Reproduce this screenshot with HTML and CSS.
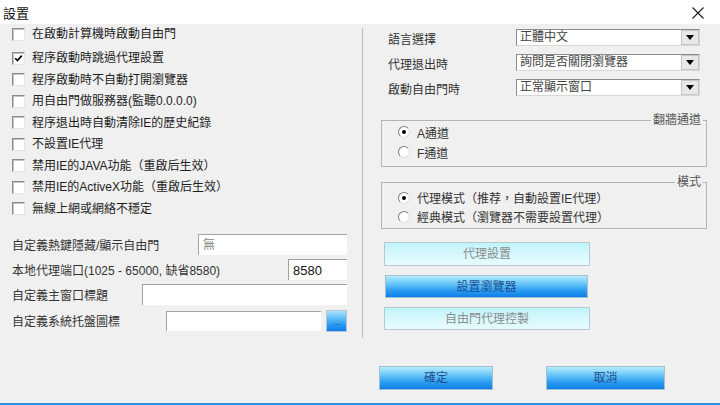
FILE: index.html
```html
<!DOCTYPE html>
<html lang="zh-Hant">
<head>
<meta charset="utf-8">
<title>設置</title>
<link rel="stylesheet" href="styles.css">
</head>
<body>
<div class="window">
  <header class="titlebar">
    <span class="title">設置</span>
    <span class="close"><svg width="12" height="12" viewBox="0 0 12 12"><path d="M0.5 0.5 L11.5 11.5 M11.5 0.5 L0.5 11.5" stroke="#1a1a1a" stroke-width="1.1" fill="none"/></svg></span>
  </header>
  <main class="content">
    <section class="left">
      <ul class="checks">
        <li class="check first"><span class="box"></span>在啟動計算機時啟動自由門</li>
        <li class="check"><span class="box"><svg width="9" height="9" viewBox="0 0 9 9"><path d="M1.2 4.2 L3.4 6.6 L7.8 1.6" stroke="#000" stroke-width="1.7" fill="none"/></svg></span>程序啟動時跳過代理設置</li>
        <li class="check"><span class="box"></span>程序啟動時不自動打開瀏覽器</li>
        <li class="check"><span class="box"></span>用自由門做服務器(監聽0.0.0.0)</li>
        <li class="check"><span class="box"></span>程序退出時自動清除IE的歷史紀錄</li>
        <li class="check"><span class="box"></span>不設置IE代理</li>
        <li class="check"><span class="box"></span>禁用IE的JAVA功能（重啟后生效）</li>
        <li class="check"><span class="box"></span>禁用IE的ActiveX功能（重啟后生效）</li>
        <li class="check"><span class="box"></span>無線上網或網絡不穩定</li>
      </ul>
      <div class="fields">
        <div class="field"><label>自定義熱鍵隱藏/顯示自由門</label><span class="input w-hotkey placeholder">無</span></div>
        <div class="field"><label>本地代理端口(1025 - 65000, 缺省8580)</label><span class="input w-port">8580</span></div>
        <div class="field"><label>自定義主窗口標題</label><span class="input w-title"></span></div>
        <div class="field last"><label>自定義系統托盤圖標</label><span class="input w-tray"></span><span class="browse">...</span></div>
      </div>
    </section>
    <section class="right">
      <div class="opts">
        <div class="opt"><label>語言選擇</label><span class="select"><span>正體中文</span><span class="arrow"><svg width="8" height="5" viewBox="0 0 8 5"><path d="M0 0 H8 L4 5 Z" fill="#000"/></svg></span></span></div>
        <div class="opt"><label>代理退出時</label><span class="select"><span>詢問是否關閉瀏覽器</span><span class="arrow"><svg width="8" height="5" viewBox="0 0 8 5"><path d="M0 0 H8 L4 5 Z" fill="#000"/></svg></span></span></div>
        <div class="opt"><label>啟動自由門時</label><span class="select"><span>正常顯示窗口</span><span class="arrow"><svg width="8" height="5" viewBox="0 0 8 5"><path d="M0 0 H8 L4 5 Z" fill="#000"/></svg></span></span></div>
      </div>
      <div class="group group-a">
        <span class="legend">翻牆通道</span>
        <div class="radio"><span class="dot on"></span>A通道</div>
        <div class="radio"><span class="dot"></span>F通道</div>
      </div>
      <div class="group group-b">
        <span class="legend">模式</span>
        <div class="radio"><span class="dot on"></span>代理模式（推荐，自動設置IE代理）</div>
        <div class="radio"><span class="dot"></span>經典模式（瀏覽器不需要設置代理）</div>
      </div>
      <div class="actions">
        <button class="btn light">代理設置</button>
        <button class="btn blue mid">設置瀏覽器</button>
        <button class="btn light short">自由門代理控製</button>
      </div>
    </section>
  </main>
  <footer class="footer">
    <button class="btn blue ok">確定</button>
    <button class="btn blue cancel">取消</button>
  </footer>
</div>
</body>
</html>
```

FILE: styles.css
```css
* { box-sizing: border-box; margin: 0; padding: 0; }
html, body { width: 720px; height: 405px; overflow: hidden; }
body {
  font-family: "Liberation Sans", "Noto Sans CJK TC", sans-serif;
  font-size: 12px;
  color: #222;
  background: #f0f0f0;
}
.window { width: 720px; height: 405px; display: flex; flex-direction: column; }

.titlebar {
  height: 24px;
  background: #fff;
  display: flex;
  align-items: center;
  justify-content: space-between;
  padding: 0 16px 0 3px;
}
.title { font-size: 13px; color: #111; }
.close { width: 12px; height: 12px; display: flex; margin-top: 1px; }

.content { height: 314px; display: flex; }

.left { width: 362px; padding: 0 15px 0 12px; display: flex; flex-direction: column; }
.checks { list-style: none; }
.check { height: 21.5px; display: flex; align-items: center; gap: 7px; color: #1e1e1e; line-height: 14px; }
.check.first { height: 20px; margin-bottom: 3.5px; }
.box {
  width: 13px; height: 13px;
  background: #fff;
  border: 1px solid;
  border-color: #8a8a8a #e4e4e4 #e4e4e4 #8a8a8a;
  box-shadow: inset 1px 1px 0 #c4c4c4;
  display: flex; align-items: center; justify-content: center;
  flex: none;
}

.fields { margin-top: 14.5px; display: flex; flex-direction: column; gap: 4px; }
.field { height: 21px; display: flex; align-items: center; color: #333; }
.field.last { margin-top: 1px; }
.input {
  margin-left: auto;
  height: 21px;
  background: #fff;
  border-top: 1px solid #a2a2a2;
  border-left: 1px solid #a2a2a2;
  padding: 2px 4px;
  line-height: 17px;
  color: #111;
  font-size: 13px;
}
.input.placeholder { color: #888; font-size: 12px; }
.w-hotkey { width: 149px; }
.w-port { width: 59px; }
.w-title { width: 205px; }
.w-tray { width: 155px; height: 20px; }
.browse {
  width: 21px; height: 22px;
  margin-left: 5px;
  border: 1px solid #b6c6d2;
  background: linear-gradient(#a9e3fb, #4fb5f3 45%, #1c90ee 80%, #0e80e6);
  color: #1d4f91;
  font-size: 9px;
  line-height: 9px;
  text-align: center;
  display: flex; align-items: flex-end; justify-content: center;
  padding-bottom: 4px;
}

.right {
  flex: 1;
  margin-top: 4px;
  border-left: 1px solid #bcbcbc;
  padding: 1px 13px 0 18px;
  display: flex; flex-direction: column;
}
.opts { display: flex; flex-direction: column; gap: 8px; }
.opt { height: 17px; display: flex; align-items: center; }
.opt label { width: 135px; padding: 4px 0 0 7px; line-height: 14px; color: #333; }
.select {
  width: 184px; height: 17px;
  background: #fff;
  border: 1px solid;
  border-color: #8c8c8c #d8d8d8 #d8d8d8 #8c8c8c;
  display: flex; align-items: center; justify-content: space-between;
  padding-left: 3px;
  color: #444;
  line-height: 15px;
}
.arrow {
  width: 18px; height: 15px;
  background: #e8e8e8;
  border: 1px solid #c6c6c6;
  display: flex; align-items: center; justify-content: center;
}

.group { position: relative; border: 1px solid #b4b4b4; }
.group-a { margin-top: 24px; padding: 1px 0 4px 16px; }
.group-b { margin-top: 15px; padding: 5px 0 2px 16px; }
.group-a .radio { height: 20px; }
.group-b .radio { height: 19px; }
.legend {
  position: absolute;
  top: -8px; right: 3px;
  background: #f0f0f0;
  padding: 0 2px;
  line-height: 14px;
  color: #555;
}
.radio { display: flex; align-items: center; gap: 7px; color: #333; }
.dot {
  width: 12px; height: 12px;
  border-radius: 50%;
  background: #fff;
  border: 1px solid;
  border-color: #7c7c7c #dedede #dedede #7c7c7c;
  display: flex; align-items: center; justify-content: center;
  flex: none;
}
.dot.on::after { content: ""; width: 4px; height: 4px; border-radius: 50%; background: #000; }

.actions { margin-top: 13px; padding-left: 3px; display: flex; flex-direction: column; gap: 9px; }
.btn {
  font-family: "Liberation Sans", "Noto Sans CJK TC", sans-serif;
  font-size: 12px;
  line-height: 14px;
  cursor: default;
}
.btn.light {
  width: 206px; height: 24px;
  border: 1px solid #bcc9cc;
  background: linear-gradient(#bff4fb, #d6f8fc 50%, #e6fbfd);
  color: #8c8c8c;
}
.btn.light.short { height: 23px; }
.btn.blue {
  border: 1px solid #a6bfd0;
  background: linear-gradient(#b3ecfd, #6cc8f8 35%, #2a9bf1 70%, #0c80e7);
  color: #1d4f91;
}
.btn.mid { width: 203px; height: 23px; margin-left: 1px; }

.footer {
  height: 67px;
  padding: 28px 0 0 379px;
  display: flex; align-items: flex-start; gap: 53px;
  border-bottom: 2px solid #2b90de;
}
.btn.ok { width: 114px; height: 24px; }
.btn.cancel { width: 119px; height: 24px; }
```
